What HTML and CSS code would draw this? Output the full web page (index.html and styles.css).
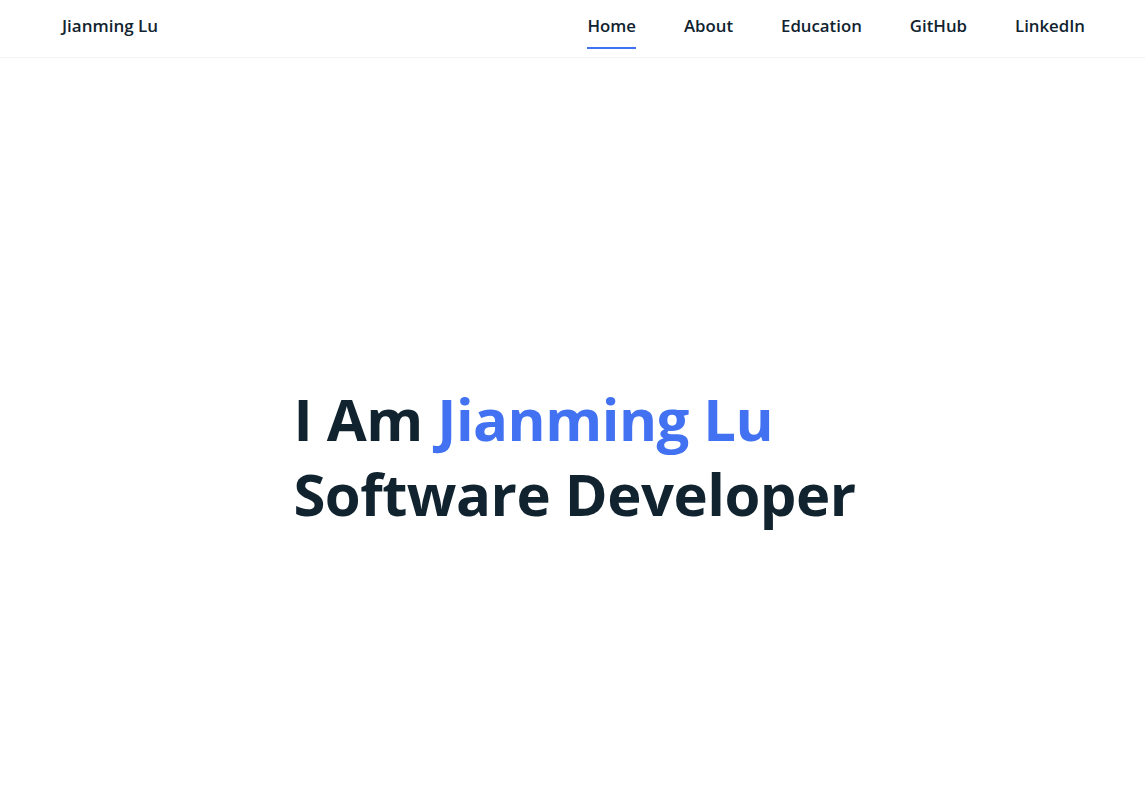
FILE: index.html
```html
<!DOCTYPE html>
<html lang="en">
<head>
<meta charset="utf-8">
<title>Jianming Lu</title>
<link rel="stylesheet" href="styles.css">
</head>
<body>
<header class="topbar">
  <a class="brand" href="#">Jianming Lu</a>
  <nav class="nav">
    <a class="nav-link active" href="#">Home</a>
    <a class="nav-link" href="#">About</a>
    <a class="nav-link" href="#">Education</a>
    <a class="nav-link" href="#">GitHub</a>
    <a class="nav-link" href="#">LinkedIn</a>
  </nav>
</header>
<main class="hero">
  <h1 class="hero-title">I Am <span class="accent">Jianming Lu</span><br>Software Developer</h1>
</main>
</body>
</html>
```
FILE: styles.css
```css
* { box-sizing: border-box; }
html, body { margin: 0; padding: 0; height: 100%; }
body {
  font-family: "Open Sans", "Noto Sans", sans-serif;
  color: #10232f;
  background: #ffffff;
  display: flex;
  flex-direction: column;
}
a { color: inherit; text-decoration: none; }
.topbar {
  height: 58px;
  flex: none;
  display: flex;
  align-items: center;
  justify-content: space-between;
  padding: 0 60px 6px 62px;
  border-bottom: 1px solid #f1f2f4;
}
.brand {
  font-size: 17px;
  font-weight: 600;
}
.nav {
  display: flex;
  gap: 48px;
  height: 100%;
}
.nav-link {
  font-size: 16.8px;
  font-weight: 600;
  display: flex;
  align-items: center;
  height: 100%;
  position: relative;
}
.nav-link.active::after {
  content: "";
  position: absolute;
  left: 0;
  right: 0;
  bottom: 2px;
  height: 2px;
  background: #4272f2;
}
.hero {
  flex: 1;
  display: flex;
  align-items: center;
  justify-content: center;
  padding-top: 50px;
  padding-left: 4px;
}
.hero-title {
  margin: 0;
  font-size: 58px;
  line-height: 75px;
  font-weight: 700;
  letter-spacing: -0.5px;
  color: #10232f;
}
.accent { color: #4272f2; }
```
